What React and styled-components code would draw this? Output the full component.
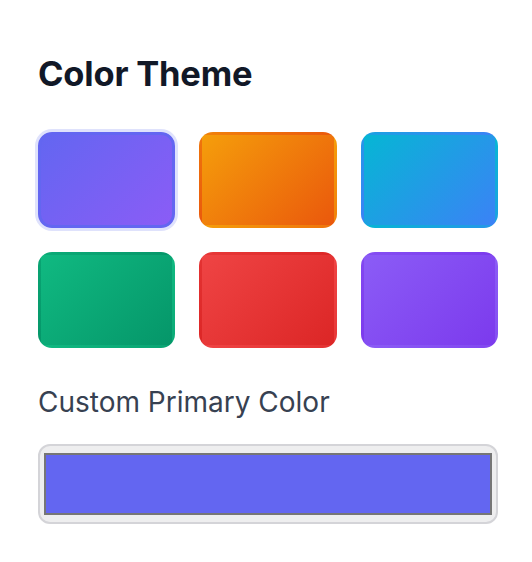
import React, { useState } from "react";
import styled, { createGlobalStyle } from "styled-components";

const GlobalStyle = createGlobalStyle`
  html, body { margin: 0; padding: 0; background: #ffffff; }
  body { font-family: Inter, "Liberation Sans", sans-serif; -webkit-font-smoothing: antialiased; }
`;

const Panel = styled.section`
  width: 460px;
  padding: 53px 34px 40px 38px;
  display: flex;
  flex-direction: column;
`;

const Title = styled.h2`
  margin: 0 0 37px;
  font-size: 34.5px;
  line-height: 42px;
  font-weight: 700;
  color: #111827;
  letter-spacing: -0.2px;
`;

const Grid = styled.div`
  display: grid;
  grid-template-columns: repeat(3, 1fr);
  gap: 24px;
`;

const Swatch = styled.button`
  height: 96px;
  border-radius: 14px;
  border: 3px solid ${(p) => (p.$selected ? "#6366f1" : "transparent")};
  background: linear-gradient(135deg, ${(p) => p.$from}, ${(p) => p.$to});
  box-shadow: ${(p) => (p.$selected ? "0 0 0 3px #dfe2fc" : "none")};
  padding: 0;
  cursor: pointer;
`;

const Label = styled.label`
  margin: 37px 0 24px;
  font-size: 28px;
  line-height: 35px;
  font-weight: 400;
  color: #374151;
`;

const ColorInput = styled.input`
  -webkit-appearance: none;
  appearance: none;
  box-sizing: border-box;
  width: 460px;
  height: 80px;
  padding: 0;
  margin: 0;
  border: 2px solid #d4d4d8;
  border-radius: 12px;
  background: #eeeeef;
  cursor: pointer;

  &::-webkit-color-swatch-wrapper {
    padding: 7px 4px;
  }
  &::-webkit-color-swatch {
    border: 2px solid #767676;
    border-radius: 0;
  }
`;

const themes = [
  { from: "#6366f1", to: "#8b5cf6" },
  { from: "#f59e0b", to: "#ea580c" },
  { from: "#06b6d4", to: "#3b82f6" },
  { from: "#10b981", to: "#059669" },
  { from: "#ef4444", to: "#dc2626" },
  { from: "#8b5cf6", to: "#7c3aed" },
];

export default function App() {
  const [selected, setSelected] = useState(0);
  const [color, setColor] = useState("#6366f1");
  return (
    <>
      <GlobalStyle />
      <Panel>
        <Title>Color Theme</Title>
        <Grid>
          {themes.map((t, i) => (
            <Swatch
              key={i}
              $from={t.from}
              $to={t.to}
              $selected={selected === i}
              onClick={() => setSelected(i)}
              aria-label={`Theme ${i + 1}`}
            />
          ))}
        </Grid>
        <Label htmlFor="primary">Custom Primary Color</Label>
        <ColorInput
          id="primary"
          type="color"
          value={color}
          onChange={(e) => setColor(e.target.value)}
        />
      </Panel>
    </>
  );
}
